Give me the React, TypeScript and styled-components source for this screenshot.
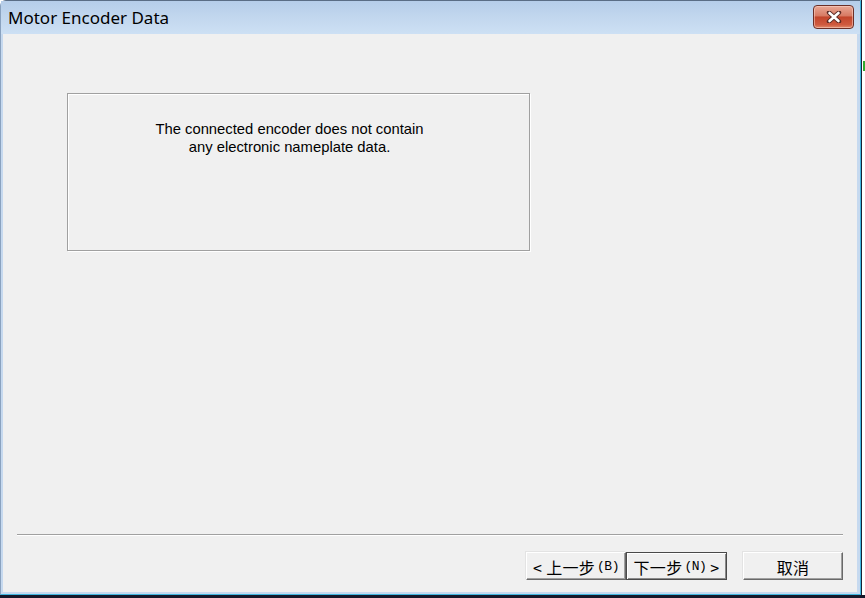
import React from "react";
import styled, { createGlobalStyle } from "styled-components";

const Global = createGlobalStyle`
  html, body { margin: 0; padding: 0; background: #ffffff; overflow: hidden; }
  #root { width: 865px; height: 598px; }
`;

const Screen = styled.div`
  width: 865px;
  height: 598px;
  display: flex;
  flex-direction: column;
  background: #ffffff;
  position: relative;
`;

const TopArea = styled.div`
  display: flex;
  flex: 1;
  min-height: 0;
`;

const Outside = styled.div`
  flex: 1;
  background: #ffffff;
  position: relative;
`;

const GreenMark = styled.div`
  position: absolute;
  left: 1px;
  top: 61px;
  width: 3px;
  height: 10px;
  background: #2fa82f;
`;

const Taskbar = styled.div`
  height: 3px;
  background: #15182a;
`;

const WindowOuter = styled.div`
  width: 862px;
  display: flex;
  flex-direction: column;
  border-right: 1px solid #1a2233;
  box-sizing: border-box;
`;

const WindowFrame = styled.div`
  flex: 1;
  display: flex;
  flex-direction: column;
  background: #c6d9ef;
  border-right: 1px solid #3fb6df;
  border-bottom: 1px solid #3fb6df;
  border-top-left-radius: 6px;
  border-top: 1px solid #5a6d85;
  border-left: 1px solid #8aa2bf;
  box-sizing: border-box;
  padding: 0 2px 2px 2px;
`;

const TitleBar = styled.div`
  height: 33px;
  display: flex;
  align-items: center;
  justify-content: space-between;
  background: linear-gradient(#b5cde9, #c2d7ee 50%, #cde0f4);
  padding: 0 6px 0 7px;
  margin: 0 -2px;
`;

const Title = styled.span`
  font-family: "Noto Sans", "Open Sans", sans-serif;
  font-size: 17px;
  color: #000000;
`;

const CloseButton = styled.div`
  width: 41px;
  height: 24px;
  box-sizing: border-box;
  border: 1px solid #6b2f27;
  border-radius: 4px;
  margin-top: -2px;
  background: linear-gradient(#e9a895, #d77a63 45%, #c2452b 50%, #cf5a3f 85%, #e08a6b);
  display: flex;
  align-items: center;
  justify-content: center;
  box-shadow: inset 0 0 0 1px rgba(255, 220, 210, 0.5);
`;

const Client = styled.div`
  flex: 1;
  background: #f0f0f0;
  display: flex;
  flex-direction: column;
  padding: 59px 14px 12px 14px;
  margin-right: 1px;
`;

const GroupBox = styled.div`
  width: 463px;
  height: 158px;
  box-sizing: border-box;
  margin-left: 50px;
  border: 1px solid #a0a0a0;
  box-shadow: inset 1px 1px 0 #ffffff, 1px 1px 0 #ffffff;
  padding: 26px 18px 0 0;
`;

const Message = styled.div`
  font-family: "Liberation Sans", Arial, sans-serif;
  font-size: 14.8px;
  line-height: 18px;
  color: #000000;
  text-align: center;
`;

const Spacer = styled.div`
  flex: 1;
`;

const Separator = styled.div`
  height: 1px;
  background: #a0a0a0;
  border-bottom: 1px solid #ffffff;
`;

const ButtonRow = styled.div`
  display: flex;
  justify-content: flex-end;
  margin-top: 16px;
`;

const NavGroup = styled.div`
  display: flex;
  margin-right: 16px;
`;

const Button = styled.div<{ $default?: boolean }>`
  width: ${(p) => (p.$default ? "101px" : "100px")};
  height: 28px;
  box-sizing: border-box;
  background: #f0f0f0;
  display: flex;
  align-items: center;
  justify-content: center;
  font-family: "Noto Sans CJK SC", "Liberation Sans", sans-serif;
  font-size: 16px;
  letter-spacing: 0.3px;
  color: #000000;
  border-top: 1px solid ${(p) => (p.$default ? "#4a4a4a" : "#ffffff")};
  border-left: 1px solid ${(p) => (p.$default ? "#4a4a4a" : "#ffffff")};
  border-right: 1px solid ${(p) => (p.$default ? "#4a4a4a" : "#696969")};
  border-bottom: 1px solid ${(p) => (p.$default ? "#4a4a4a" : "#696969")};
  box-shadow: ${(p) =>
    p.$default
      ? "inset 1px 1px 0 #ffffff, inset -1px -1px 0 #8a8a8a"
      : "inset -1px -1px 0 #a0a0a0, -1px -1px 0 #e3e3e3"};
  white-space: pre;
  padding-top: 1px;
`;

const Mnemonic = styled.span`
  font-family: "Liberation Mono", monospace;
  font-size: 13px;
  letter-spacing: -0.5px;
  margin: 0 0 0 2px;
`;

export default function App() {
  return (
    <Screen>
      <Global />
      <TopArea>
        <WindowOuter>
          <WindowFrame>
            <TitleBar>
              <Title>Motor Encoder Data</Title>
              <CloseButton>
                <svg width="16" height="12" viewBox="0 0 16 12">
                  <path
                    d="M3 1.5 L13 10.5 M13 1.5 L3 10.5"
                    stroke="#5a2a24"
                    strokeWidth="4.4"
                    strokeLinecap="round"
                    fill="none"
                  />
                  <path
                    d="M3.5 2 L12.5 10 M12.5 2 L3.5 10"
                    stroke="#ffffff"
                    strokeWidth="2.6"
                    strokeLinecap="round"
                    fill="none"
                  />
                </svg>
              </CloseButton>
            </TitleBar>
            <Client>
              <GroupBox>
                <Message>
                  The connected encoder does not contain
                  <br />
                  any electronic nameplate data.
                </Message>
              </GroupBox>
              <Spacer />
              <Separator />
              <ButtonRow>
                <NavGroup>
                  <Button>
                    {"< 上一步"}
                    <Mnemonic>(B)</Mnemonic>
                  </Button>
                  <Button $default>
                    {"下一步"}
                    <Mnemonic>(N)</Mnemonic>
                    {" >"}
                  </Button>
                </NavGroup>
                <Button>取消</Button>
              </ButtonRow>
            </Client>
          </WindowFrame>
        </WindowOuter>
        <Outside>
          <GreenMark />
        </Outside>
      </TopArea>
      <Taskbar />
    </Screen>
  );
}
